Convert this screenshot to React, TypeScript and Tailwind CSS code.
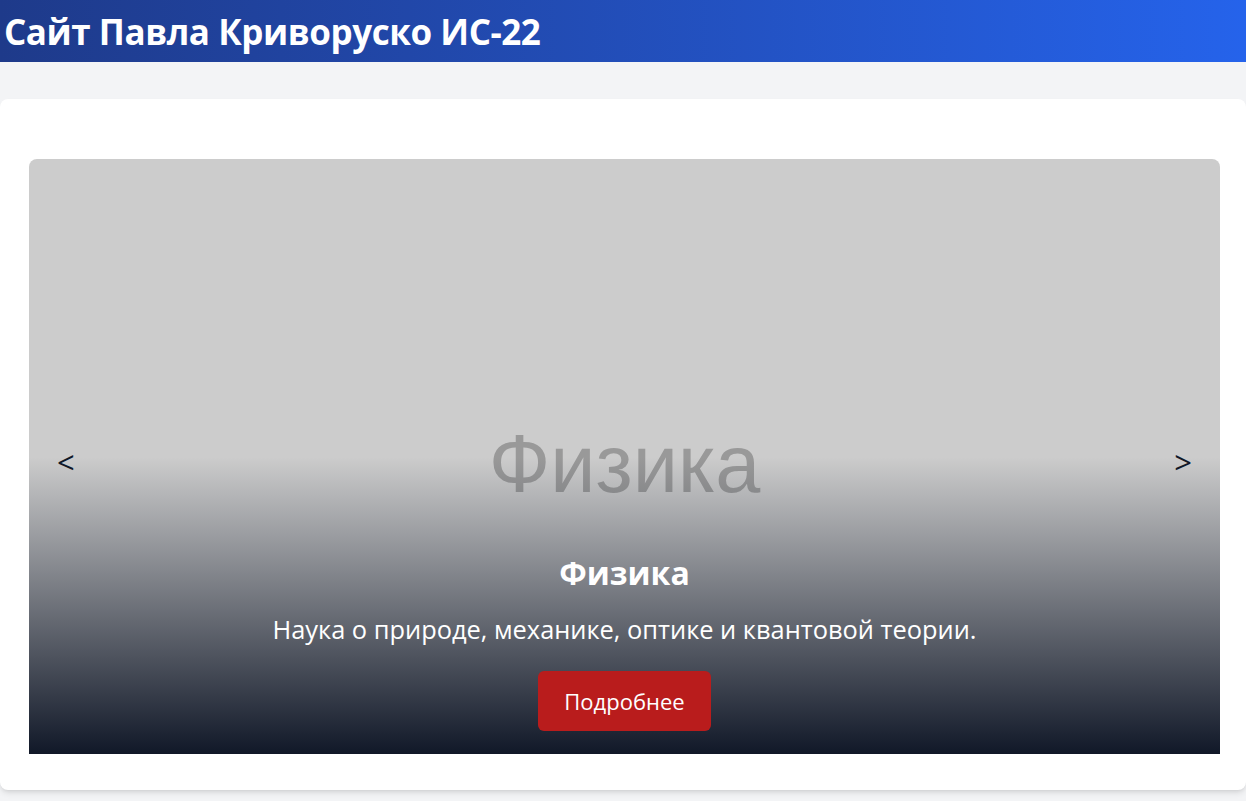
const slide = {
  title: "Физика",
  text: "Наука о природе, механике, оптике и квантовой теории.",
};

export default function App() {
  return (
    <div className="min-h-[801px] bg-gray-100 font-['Open_Sans',sans-serif]">
      <header className="flex h-[62px] items-center bg-gradient-to-r from-[#1e3a8a] to-[#2563eb] px-1">
        <h1 className="text-[35px] font-bold leading-none tracking-[-0.45px] text-white">Сайт Павла Криворуско ИС-22</h1>
      </header>

      <main className="pt-[37px]">
        <section className="rounded-lg bg-white pb-[36px] pl-[29px] pr-[26px] pt-[60px] shadow-md">
          <div className="relative h-[595px] overflow-hidden rounded-t-lg">
            <div className="flex h-full items-center justify-center bg-[#cccccc] pt-[16px]">
              <span className="font-['Liberation_Sans',sans-serif] text-[81px] text-[#999999]">{slide.title}</span>
            </div>

            <div className="absolute inset-x-0 bottom-0 flex h-1/2 flex-col items-center justify-end bg-gradient-to-t from-gray-900 to-transparent pb-[23px] text-white">
              <h2 className="text-[32px] font-bold leading-none">{slide.title}</h2>
              <p className="mt-[28px] text-[25.4px] leading-none">{slide.text}</p>
              <button className="mt-[29px] h-[60px] w-[173px] rounded-md bg-[#b91c1c] text-[22px] text-white">Подробнее</button>
            </div>

            <button className="absolute left-[28px] top-1/2 mt-[5px] -translate-y-1/2 text-[31px] leading-none text-gray-900">&lt;</button>
            <button className="absolute right-[28px] top-1/2 mt-[5px] -translate-y-1/2 text-[31px] leading-none text-gray-900">&gt;</button>
          </div>
        </section>
      </main>
    </div>
  );
}
